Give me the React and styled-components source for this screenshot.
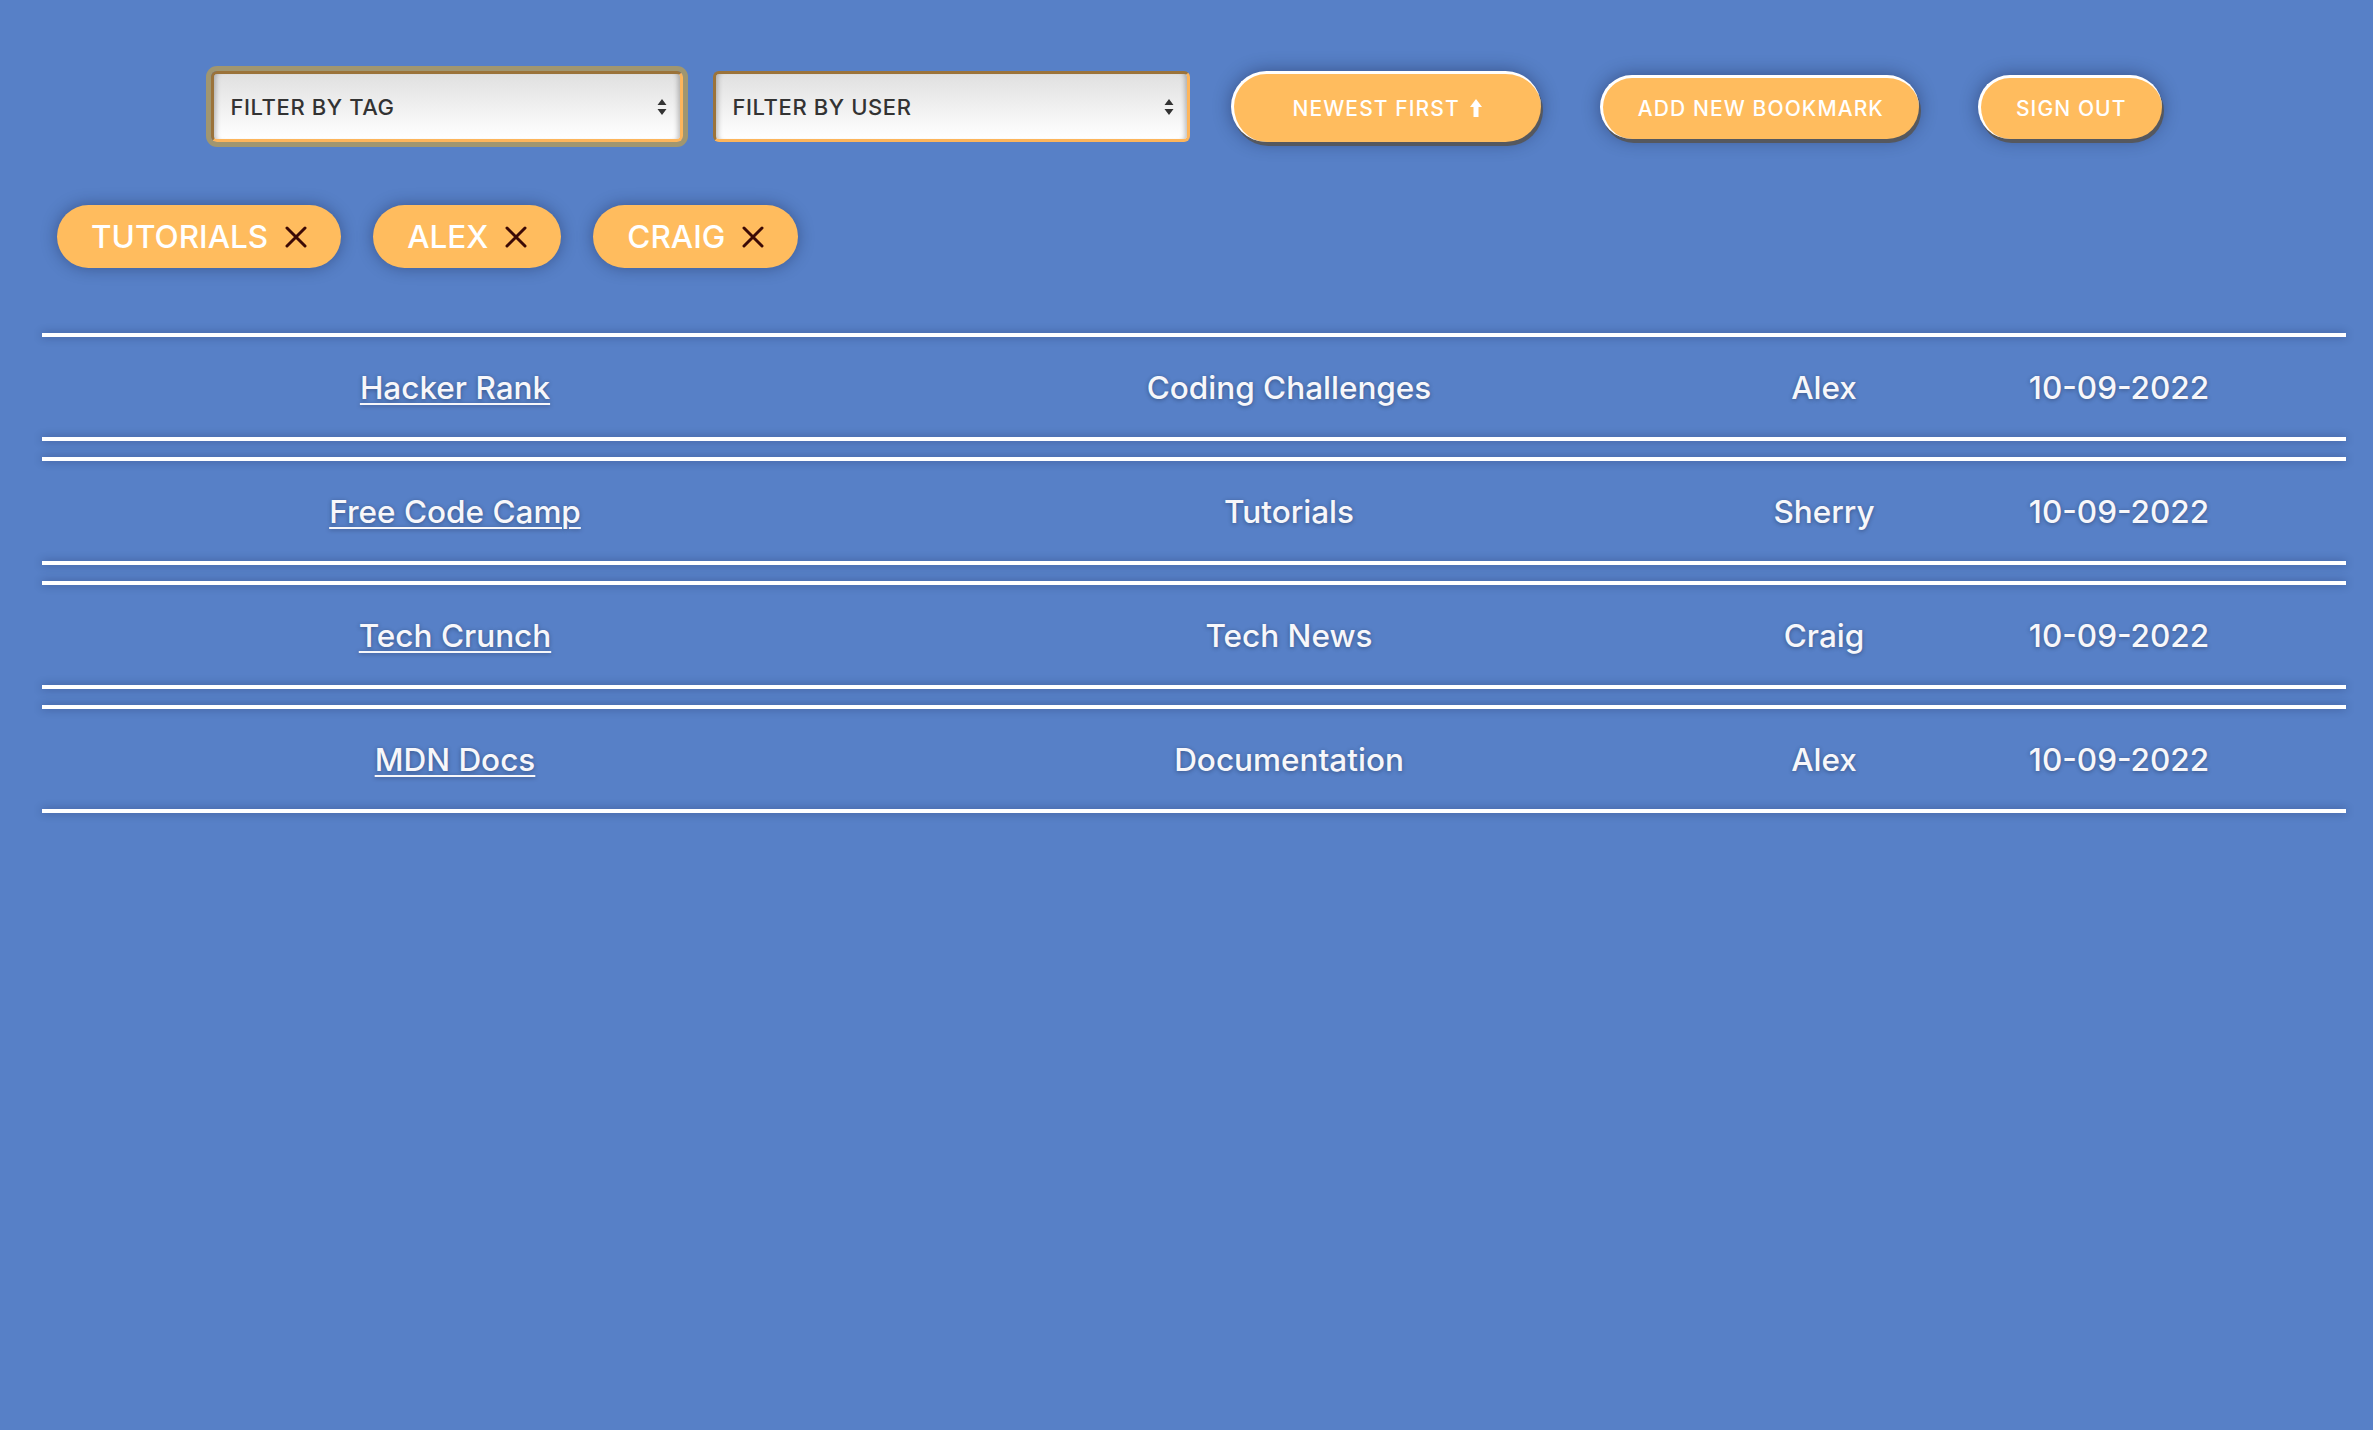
import React from 'react';
import styled, { createGlobalStyle } from 'styled-components';

const GlobalStyle = createGlobalStyle`
  html, body {
    margin: 0;
    padding: 0;
    background: #5780c7;
    min-height: 100%;
  }
  body {
    font-family: Inter, "Open Sans", "Liberation Sans", sans-serif;
    min-height: 1430px;
  }
`;

const Page = styled.div`
  padding: 71px 27px 0 42px;
  box-sizing: border-box;
`;

const Toolbar = styled.div`
  display: flex;
  justify-content: center;
  align-items: center;
  gap: 41px;
  height: 71px;
  margin-right: -27px;
  margin-left: -42px;
`;

const SelectGroup = styled.div`
  display: flex;
  align-items: center;
  gap: 30px;
`;

const ButtonGroup = styled.div`
  display: flex;
  align-items: center;
  gap: 59px;
`;

const SelectWrap = styled.div`
  position: relative;
  width: ${p => p.$width}px;
  height: 71px;
  border-radius: 6px;
  box-shadow: ${p => (p.$focused ? '0 0 0 5px #a09670' : 'none')};
`;

const NativeSelect = styled.select`
  appearance: none;
  -webkit-appearance: none;
  width: 100%;
  height: 100%;
  box-sizing: border-box;
  border: 3px solid #fdb55b;
  border-top-color: #9b733a;
  border-left-color: #9b733a;
  border-radius: 6px;
  background: linear-gradient(#e0e0e0, #f3f3f3 60%, #ffffff);
  box-shadow: inset 6px 0 5px -4px rgba(0, 0, 0, 0.25), inset -6px 0 5px -4px rgba(0, 0, 0, 0.25);
  padding: 0 40px 0 16px;
  font-family: Inter, "Open Sans", sans-serif;
  font-size: 22px;
  font-weight: 500;
  letter-spacing: 0.6px;
  color: #333;
  text-transform: uppercase;
  outline: none;
`;

const Chevrons = styled.svg`
  position: absolute;
  right: 16px;
  top: 50%;
  transform: translateY(-50%);
  pointer-events: none;
`;

const Button = styled.button`
  display: flex;
  align-items: center;
  justify-content: center;
  gap: 9px;
  height: ${p => p.$height}px;
  padding: 0 ${p => p.$pad}px;
  box-sizing: border-box;
  border: none;
  border-top: 3px solid #ffffff;
  border-left: 3px solid #ffffff;
  border-radius: 40px;
  background: #ffbc5e;
  box-shadow: 2px 4px 0 #55585f, 0 0 18px rgba(15, 25, 60, 0.45);
  color: #ffffff;
  font-family: Inter, "Open Sans", sans-serif;
  font-size: 21px;
  font-weight: 500;
  letter-spacing: 1.1px;
  text-transform: uppercase;
  cursor: pointer;
`;

const TagRow = styled.div`
  display: flex;
  gap: 32px;
  margin: 63px 0 0 15px;
`;

const Tag = styled.div`
  display: flex;
  align-items: center;
  gap: 17px;
  height: 63px;
  padding: 0 34px;
  border-radius: 32px;
  background: #ffbc5e;
  box-shadow: 0 0 16px rgba(15, 25, 60, 0.4);
  color: #ffffff;
  font-size: 31.5px;
  font-weight: 500;
  text-transform: uppercase;
`;

const Close = styled.svg`
  flex: none;
`;

const Table = styled.div`
  display: flex;
  flex-direction: column;
  gap: 16px;
  margin-top: 65px;
`;

const Row = styled.div`
  position: relative;
  display: grid;
  grid-template-columns: 826fr 842fr 228fr 362fr 46fr;
  align-items: center;
  height: 108px;

  &::before,
  &::after {
    content: '';
    position: absolute;
    left: 0;
    right: 0;
    height: 4px;
    background: #ffffff;
    box-shadow: 0 0 8px rgba(25, 35, 85, 0.45);
  }
  &::before { top: 0; }
  &::after { bottom: 0; }
`;

const Cell = styled.div`
  text-align: center;
  color: #f7f7fa;
  font-size: 31.5px;
  font-weight: 500;
  text-shadow: 0 1px 4px rgba(20, 30, 60, 0.45);
`;

const Link = styled.a`
  color: #f7f7fa;
  text-decoration: underline;
  text-decoration-thickness: 2px;
  text-underline-offset: 4px;
`;

const bookmarks = [
  { title: 'Hacker Rank', tag: 'Coding Challenges', user: 'Alex', date: '10-09-2022' },
  { title: 'Free Code Camp', tag: 'Tutorials', user: 'Sherry', date: '10-09-2022' },
  { title: 'Tech Crunch', tag: 'Tech News', user: 'Craig', date: '10-09-2022' },
  { title: 'MDN Docs', tag: 'Documentation', user: 'Alex', date: '10-09-2022' },
];

const tags = ['Tutorials', 'Alex', 'Craig'];

const SelectBox = ({ label, width, focused }) => (
  <SelectWrap $width={width} $focused={focused}>
    <NativeSelect defaultValue="">
      <option value="">{label}</option>
    </NativeSelect>
    <Chevrons width="10" height="18" viewBox="0 0 10 18">
      <path d="M5 1 L9.5 7 H0.5 Z M5 17 L9.5 11 H0.5 Z" fill="#333" />
    </Chevrons>
  </SelectWrap>
);

const App = () => (
  <>
    <GlobalStyle />
    <Page>
      <Toolbar>
        <SelectGroup>
          <SelectBox label="Filter by tag" width={472} focused />
          <SelectBox label="Filter by user" width={477} />
        </SelectGroup>
        <ButtonGroup>
          <Button $height={71} $pad={58}>
            Newest First
            <svg width="14" height="20" viewBox="0 0 14 20">
              <path d="M7 1 L13 9 H9.5 V19 H4.5 V9 H1 Z" fill="#fff" />
            </svg>
          </Button>
          <Button $height={64} $pad={35}>Add New Bookmark</Button>
          <Button $height={64} $pad={35}>Sign Out</Button>
        </ButtonGroup>
      </Toolbar>

      <TagRow>
        {tags.map(t => (
          <Tag key={t}>
            {t}
            <Close width="22" height="22" viewBox="0 0 22 22">
              <path d="M2 2 L20 20 M20 2 L2 20" stroke="#3b0a06" strokeWidth="3" strokeLinecap="round" />
            </Close>
          </Tag>
        ))}
      </TagRow>

      <Table>
        {bookmarks.map(b => (
          <Row key={b.title}>
            <Cell><Link href="#">{b.title}</Link></Cell>
            <Cell>{b.tag}</Cell>
            <Cell>{b.user}</Cell>
            <Cell>{b.date}</Cell>
          </Row>
        ))}
      </Table>
    </Page>
  </>
);

export default App;
